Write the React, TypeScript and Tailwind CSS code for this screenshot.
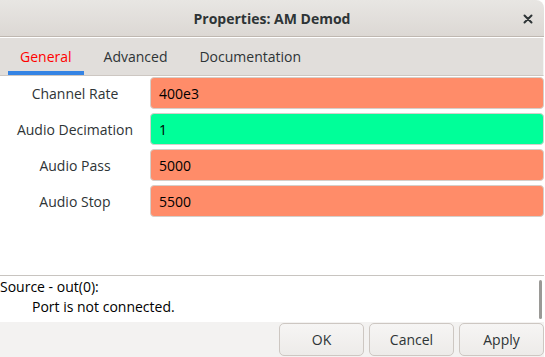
import React from 'react';

interface Param {
  label: string;
  value: string;
  kind: 'float' | 'int';
}

const params: Param[] = [
  { label: 'Channel Rate', value: '400e3', kind: 'float' },
  { label: 'Audio Decimation', value: '1', kind: 'int' },
  { label: 'Audio Pass', value: '5000', kind: 'float' },
  { label: 'Audio Stop', value: '5500', kind: 'float' },
];

const tabs = ['General', 'Advanced', 'Documentation'];

const App: React.FC = () => {
  return (
    <div className="w-[545px] h-[357px] bg-white overflow-hidden font-['Open_Sans',sans-serif] text-[14px] text-[#2e3436]">
      <div className="w-[544px] h-[357px] flex flex-col">
        {/* Title bar */}
        <div className="h-[37px] shrink-0 relative flex items-center justify-center bg-gradient-to-b from-[#e8e6e3] to-[#dcd8d4] border-b border-[#bfb8b1] rounded-tr-[8px]">
          <span className="font-bold text-[14px] text-[#2e3436]">Properties: AM Demod</span>
          <button className="absolute right-[11px] top-[14px] w-[10px] h-[10px] flex items-center justify-center">
            <svg width="10" height="10" viewBox="0 0 10 10">
              <path d="M1.5 1.5 L8.5 8.5 M8.5 1.5 L1.5 8.5" stroke="#2e3436" strokeWidth="2" strokeLinecap="round" />
            </svg>
          </button>
        </div>

        {/* Tabs */}
        <div className="h-[38px] shrink-0 mt-[1px] bg-[#e1dedb] border-b border-[#cdc7c2] border-r border-r-[#f4f3f2] flex items-stretch pl-[8px] gap-[8px]">
          {tabs.map((t, i) => (
            <div
              key={t}
              className={
                i === 0
                  ? 'px-[12px] pt-[8px] border-b-[4px] border-[#3584e4] text-[#ff0000]'
                  : 'px-[12px] pt-[8px] border-b-[4px] border-transparent'
              }
            >
              {t}
            </div>
          ))}
        </div>

        {/* Params */}
        <div className="h-[200px] shrink-0 flex flex-col gap-[4px] pt-[1px] border-b border-[#c8c4c0]">
          {params.map((p) => (
            <div key={p.label} className="flex items-center h-[32px]">
              <div className="w-[150px] text-center shrink-0">{p.label}</div>
              <div
                className={
                  p.kind === 'int'
                    ? 'flex-1 h-[32px] flex items-center pl-[8px] rounded-[4px] border border-[#d5cfca] bg-[#00ff99] text-black'
                    : 'flex-1 h-[32px] flex items-center pl-[8px] rounded-[4px] border border-[#d5cfca] bg-[#ff8c69] text-black'
                }
              >
                {p.value}
              </div>
            </div>
          ))}
        </div>

        {/* Messages */}
        <div className="h-[46px] shrink-0 relative bg-white pt-[1px]">
          <div className="leading-[20px] text-black">Source - out(0):</div>
          <div className="leading-[20px] pl-[32px] text-black">Port is not connected.</div>
          <div className="absolute right-[2px] top-[4px] w-[3px] h-[39px] rounded-full bg-[#9a9996]" />
        </div>

        {/* Buttons */}
        <div className="flex-1 bg-[#f3f2f1] flex justify-end items-start gap-[5px] pt-[1px]">
          {['OK', 'Cancel', 'Apply'].map((b) => (
            <button
              key={b}
              className="w-[85px] h-[33px] rounded-[5px] border border-[#cdc7c2] bg-gradient-to-b from-[#f6f5f4] to-[#edebe9] text-[14px] text-[#2e3436]"
            >
              {b}
            </button>
          ))}
        </div>
      </div>
    </div>
  );
};

export default App;
